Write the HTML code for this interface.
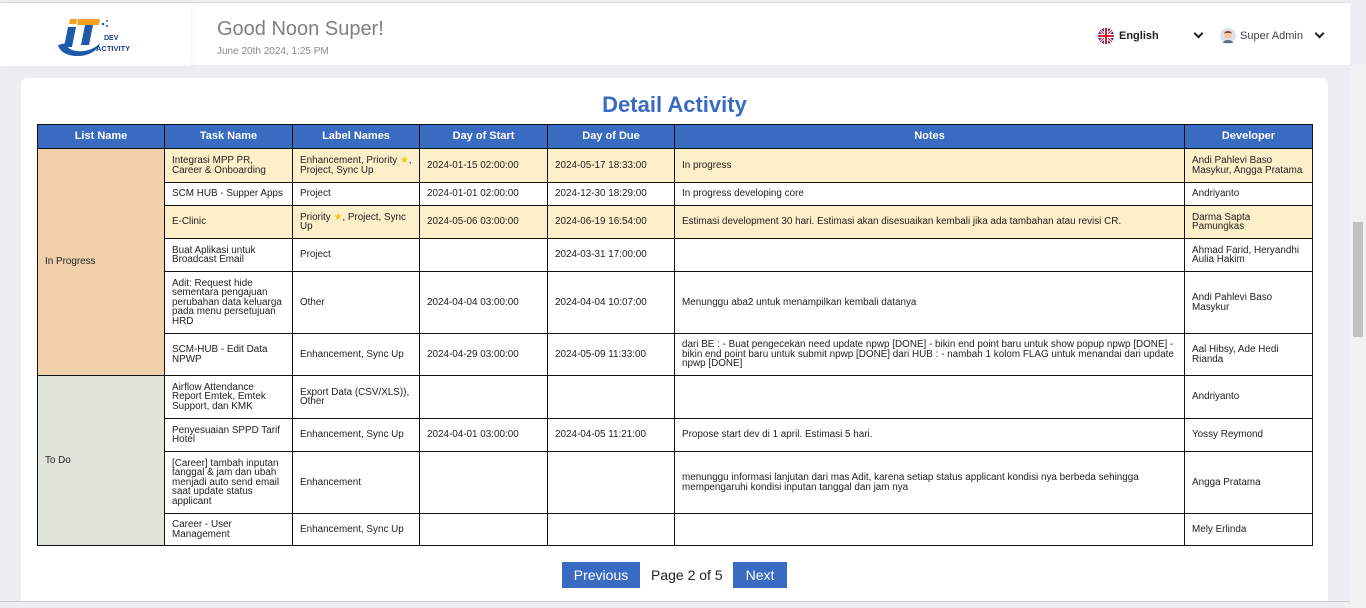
<!DOCTYPE html>
<html><head><meta charset="utf-8"><style>
*{box-sizing:border-box;margin:0;padding:0}
body{width:1366px;height:608px;overflow:hidden;background:#eceef2;font-family:"Liberation Sans",sans-serif;position:relative}
.top{position:absolute;left:0;top:2px;width:1350px;height:63px;background:#fff;border-top:1px solid #ddd}
.side{position:absolute;left:0;top:0;width:190px;height:63px;background:#fff;box-shadow:4px 0 8px rgba(0,0,0,.04)}
.greet{position:absolute;left:217px;top:15px;font-size:20px;color:#808080}
.date{position:absolute;left:217px;top:43px;font-size:10px;color:#888}
.card{position:absolute;left:21px;top:78px;width:1307px;height:530px;background:#fff;border-radius:6px}
h1{position:absolute;left:0;width:1349px;top:92px;text-align:center;font-size:22px;color:#3a6bc2;font-weight:bold}
table{position:absolute;left:37px;top:124px;border-collapse:collapse;table-layout:fixed;width:1275px;font-size:9.9px;color:#222}
td,th{border:1px solid #111;padding:0 7px;line-height:9.5px;vertical-align:middle;overflow:hidden}
th{background:#3a6bc2;color:#fff;font-size:11px;height:24px;text-align:center}
.y td.h{background:#fdefc9}
.ip{background:#f0d1ac}
.td{background:#e0e5dc}
.btn{position:absolute;top:562px;height:26px;background:#3a6bc2;color:#fff;font-size:14px;line-height:26px;text-align:center}
.sb{position:absolute;right:0;top:65px;width:16px;height:543px;background:#f1f1f1}
.th{position:absolute;right:3px;top:157px;width:10px;height:115px;background:#c1c1c1}
.chev{position:absolute;width:7px;height:7px;border-right:2px solid #222;border-bottom:2px solid #222;transform:rotate(45deg)}
</style></head><body>
<div class="top">
<div class="side">
<svg width="90" height="44" style="position:absolute;left:56px;top:12px" viewBox="0 0 90 44">
<path d="M2 30 C6 46 40 44 44 28 C36 38 12 40 10 28 Z" fill="#1e5aa8"/>
<path d="M12 12 L20 12 L16 32 L8 32 Z" fill="#1e5aa8"/>
<path d="M14 4 L21 4 L20 9 L13 9 Z" fill="#f6a21e"/>
<path d="M22 4 L44 4 L43 10 L21 10 Z" fill="#f6a21e"/>
<path d="M29 10 L37 10 L33 30 L25 30 Z" fill="#1e5aa8"/>
<circle cx="47" cy="9" r="1.3" fill="#1e5aa8"/><circle cx="51" cy="6" r="1" fill="#1e5aa8"/><circle cx="51" cy="11" r="1" fill="#1e5aa8"/>
<text x="48" y="25" font-size="7" font-weight="bold" fill="#1e3f8a" font-family="Liberation Sans">DEV</text>
<text x="40" y="36" font-size="7.5" font-weight="bold" fill="#1e3f8a" font-family="Liberation Sans">ACTIVITY</text>
</svg></div>
<div class="greet">Good Noon Super!</div>
<div class="date">June 20th 2024, 1:25 PM</div>
<svg width="16" height="16" style="position:absolute;left:1098px;top:25px" viewBox="0 0 16 16"><circle cx="8" cy="8" r="8" fill="#22408f"/><path d="M2 2L14 14M14 2L2 14" stroke="#fff" stroke-width="3"/><path d="M2 2L14 14M14 2L2 14" stroke="#d0202e" stroke-width="1"/><path d="M8 0V16M0 8H16" stroke="#fff" stroke-width="4"/><path d="M8 0V16M0 8H16" stroke="#d0202e" stroke-width="2"/></svg>
<div style="position:absolute;left:1119px;top:27px;font-size:11px;font-weight:bold;color:#222">English</div>
<div class="chev" style="left:1195px;top:27px"></div>
<svg width="16" height="16" style="position:absolute;left:1220px;top:25px" viewBox="0 0 16 16"><circle cx="8" cy="8" r="8" fill="#dde2ea"/><circle cx="8" cy="7" r="3.5" fill="#f2c6a0"/><path d="M4 6C4 2 12 2 12 6L11 5H5Z" fill="#8a4a22"/><path d="M3 15C4 11 12 11 13 15Z" fill="#5a6a8a"/></svg>
<div style="position:absolute;left:1240px;top:27px;font-size:11px;color:#444">Super Admin</div>
<div class="chev" style="left:1316px;top:27px"></div>
</div>
<div class="card"></div>
<h1>Detail Activity</h1>
<table>
<colgroup><col style="width:127px"><col style="width:128px"><col style="width:127px"><col style="width:128px"><col style="width:127px"><col style="width:510px"><col style="width:128px"></colgroup>
<tr><th>List Name</th><th>Task Name</th><th>Label Names</th><th>Day of Start</th><th>Day of Due</th><th>Notes</th><th>Developer</th></tr>
<tr class="y" style="height:34px"><td rowspan="6" class="ip">In Progress</td><td class="h">Integrasi MPP PR, Career &amp; Onboarding</td><td class="h">Enhancement, Priority <span style="color:#f5c518">★</span>, Project, Sync Up</td><td class="h">2024-01-15 02:00:00</td><td class="h">2024-05-17 18:33:00</td><td class="h">In progress</td><td class="h">Andi Pahlevi Baso Masykur, Angga Pratama</td></tr>
<tr style="height:23px"><td>SCM HUB - Supper Apps</td><td>Project</td><td>2024-01-01 02:00:00</td><td>2024-12-30 18:29:00</td><td>In progress developing core</td><td>Andriyanto</td></tr>
<tr class="y" style="height:33px"><td class="h">E-Clinic</td><td class="h">Priority <span style="color:#f5c518">★</span>, Project, Sync Up</td><td class="h">2024-05-06 03:00:00</td><td class="h">2024-06-19 16:54:00</td><td class="h">Estimasi development 30 hari. Estimasi akan disesuaikan kembali jika ada tambahan atau revisi CR.</td><td class="h">Darma Sapta Pamungkas</td></tr>
<tr style="height:33px"><td>Buat Aplikasi untuk Broadcast Email</td><td>Project</td><td></td><td>2024-03-31 17:00:00</td><td></td><td>Ahmad Farid, Heryandhi Aulia Hakim</td></tr>
<tr style="height:62px"><td>Adit: Request hide sementara pengajuan perubahan data keluarga pada menu persetujuan HRD</td><td>Other</td><td>2024-04-04 03:00:00</td><td>2024-04-04 10:07:00</td><td>Menunggu aba2 untuk menampilkan kembali datanya</td><td>Andi Pahlevi Baso Masykur</td></tr>
<tr style="height:42px"><td>SCM-HUB - Edit Data NPWP</td><td>Enhancement, Sync Up</td><td>2024-04-29 03:00:00</td><td>2024-05-09 11:33:00</td><td>dari BE : - Buat pengecekan need update npwp [DONE] - bikin end point baru untuk show popup npwp [DONE] - bikin end point baru untuk submit npwp [DONE] dari HUB : - nambah 1 kolom FLAG untuk menandai dari update npwp [DONE]</td><td>Aal Hibsy, Ade Hedi Rianda</td></tr>
<tr style="height:43px"><td rowspan="4" class="td">To Do</td><td>Airflow Attendance Report Emtek, Emtek Support, dan KMK</td><td>Export Data (CSV/XLS)), Other</td><td></td><td></td><td></td><td>Andriyanto</td></tr>
<tr style="height:33px"><td>Penyesuaian SPPD Tarif Hotel</td><td>Enhancement, Sync Up</td><td>2024-04-01 03:00:00</td><td>2024-04-05 11:21:00</td><td>Propose start dev di 1 april. Estimasi 5 hari.</td><td>Yossy Reymond</td></tr>
<tr style="height:62px"><td>[Career] tambah inputan tanggal &amp; jam dan ubah menjadi auto send email saat update status applicant</td><td>Enhancement</td><td></td><td></td><td>menunggu informasi lanjutan dari mas Adit, karena setiap status applicant kondisi nya berbeda sehingga mempengaruhi kondisi inputan tanggal dan jam nya</td><td>Angga Pratama</td></tr>
<tr style="height:32px"><td>Career - User Management</td><td>Enhancement, Sync Up</td><td></td><td></td><td></td><td>Mely Erlinda</td></tr>
</table>
<div class="btn" style="left:562px;width:78px">Previous</div>
<div style="position:absolute;left:651px;top:567px;font-size:14px;color:#222">Page 2 of 5</div>
<div class="btn" style="left:733px;width:54px">Next</div>
<div style="position:absolute;left:0;top:601px;width:1350px;height:7px;background:#eceef2;border-top:1px solid #ccc"></div>
<div class="sb"><div class="th"></div></div>
</body></html>
